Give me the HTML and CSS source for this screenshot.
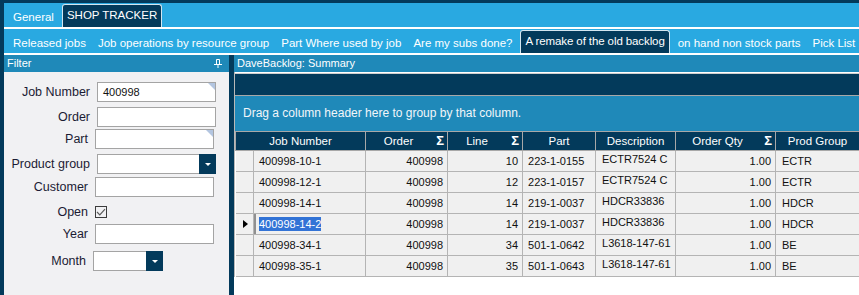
FILE: index.html
```html
<!DOCTYPE html>
<html lang="en">

<head>
  <meta charset="utf-8">
  <link rel="stylesheet" href="styles.css">
</head>

<body>
  <div class="app">
    <div class="tabstrip">
      <span class="tab first">General</span>
      <span class="tab active">SHOP TRACKER</span>
    </div>
    <div class="tabstrip sub">
      <span class="tab first">Released jobs</span>
      <span class="tab">Job operations by resource group</span>
      <span class="tab">Part Where used by job</span>
      <span class="tab">Are my subs done?</span>
      <span class="tab active">A remake of the old backlog</span>
      <span class="tab">on hand non stock parts</span>
      <span class="tab">Pick List</span>
    </div>

    <div class="main">
      <div class="filter">
        <div class="panel-title">
          <span>Filter</span>
          <svg class="pin" width="8" height="9" viewBox="0 0 8 9">
            <path d="M2.5 0.5 H5.5 V5 M2.5 0.5 V5 M0 5.5 H8 M4 5.5 V9" stroke="#fff" fill="none" stroke-width="1" />
          </svg>
        </div>
        <div class="filter-body">
          <div class="row">
            <label>Job Number</label>
            <div class="field corner">400998</div>
          </div>
          <div class="row mt5">
            <label>Order</label>
            <div class="field"></div>
          </div>
          <div class="row s2 mt2">
            <label>Part</label>
            <div class="field corner"></div>
          </div>
          <div class="row mt5">
            <label>Product group</label>
            <div class="combo"><span class="combo-btn"></span></div>
          </div>
          <div class="row s2 mt3">
            <label>Customer</label>
            <div class="field"></div>
          </div>
          <div class="row s2 mt5">
            <label>Open</label>
            <span class="check">
              <svg width="10" height="10" viewBox="0 0 10 10">
                <path d="M1 5 L3.8 7.8 L9 2.2" stroke="#5a5a5a" stroke-width="1.2" fill="none" />
              </svg>
            </span>
          </div>
          <div class="row s2 mt2">
            <label>Year</label>
            <div class="field"></div>
          </div>
          <div class="row s4 mt7">
            <label>Month</label>
            <div class="combo small"><span class="combo-btn"></span></div>
          </div>
        </div>
      </div>

      <div class="summary">
        <div class="panel-title">DaveBacklog: Summary</div>
        <div class="grid">
          <div class="band"></div>
          <div class="group-area">Drag a column header here to group by that column.</div>
          <table class="data">
            <colgroup>
              <col style="width:18px">
              <col style="width:112px">
              <col style="width:82px">
              <col style="width:75px">
              <col style="width:73px">
              <col style="width:80px">
              <col style="width:100px">
              <col style="width:84px">
            </colgroup>
            <thead>
              <tr>
                <th colspan="2">Job Number</th>
                <th class="sum">Order<span class="sigma">Σ</span></th>
                <th class="sum">Line<span class="sigma">Σ</span></th>
                <th>Part</th>
                <th>Description</th>
                <th class="sum">Order Qty<span class="sigma">Σ</span></th>
                <th>Prod Group</th>
              </tr>
            </thead>
            <tbody>
              <tr>
                <td class="ind"></td>
                <td class="txt">400998-10-1</td>
                <td class="num">400998</td>
                <td class="num">10</td>
                <td class="txt">223-1-0155</td>
                <td class="desc">ECTR7524 C</td>
                <td class="num">1.00</td>
                <td class="txt grp">ECTR</td>
              </tr>
              <tr>
                <td class="ind"></td>
                <td class="txt">400998-12-1</td>
                <td class="num">400998</td>
                <td class="num">12</td>
                <td class="txt">223-1-0157</td>
                <td class="desc">ECTR7524 C</td>
                <td class="num">1.00</td>
                <td class="txt grp">ECTR</td>
              </tr>
              <tr>
                <td class="ind"></td>
                <td class="txt">400998-14-1</td>
                <td class="num">400998</td>
                <td class="num">14</td>
                <td class="txt">219-1-0037</td>
                <td class="desc">HDCR33836</td>
                <td class="num">1.00</td>
                <td class="txt grp">HDCR</td>
              </tr>
              <tr>
                <td class="ind"><span class="arrow"></span></td>
                <td class="txt focus"><span class="sel">400998-14-2</span></td>
                <td class="num">400998</td>
                <td class="num">14</td>
                <td class="txt">219-1-0037</td>
                <td class="desc">HDCR33836</td>
                <td class="num">1.00</td>
                <td class="txt grp">HDCR</td>
              </tr>
              <tr>
                <td class="ind"></td>
                <td class="txt">400998-34-1</td>
                <td class="num">400998</td>
                <td class="num">34</td>
                <td class="txt">501-1-0642</td>
                <td class="desc">L3618-147-61</td>
                <td class="num">1.00</td>
                <td class="txt grp">BE</td>
              </tr>
              <tr>
                <td class="ind"></td>
                <td class="txt">400998-35-1</td>
                <td class="num">400998</td>
                <td class="num">35</td>
                <td class="txt">501-1-0643</td>
                <td class="desc">L3618-147-61</td>
                <td class="num">1.00</td>
                <td class="txt grp">BE</td>
              </tr>
            </tbody>
          </table>
        </div>
      </div>
    </div>
  </div>
</body>

</html>
```

FILE: styles.css
```css
body {
  margin: 0;
  width: 859px;
  height: 295px;
  overflow: hidden;
  background-color: #033a5b;
  font-family: 'Liberation Sans', Arial, sans-serif;
}

.app {
  height: 292px;
  padding: 3px 0 0 4px;
  display: flex;
  flex-direction: column;
}

/* tab strips */
.tabstrip {
  height: 24px;
  flex-shrink: 0;
  display: flex;
  align-items: flex-end;
  background-color: #29a9e1;
  color: #fff;
  font-size: 11.5px;
  white-space: nowrap;
  overflow: hidden;
}

.tabstrip.sub {
  border-top: 2px solid #fff;
  border-bottom: 2px solid #fff;
}

.tab {
  height: 20px;
  line-height: 20px;
  padding: 3px 6px 0;
}

.tab.first {
  margin-left: 3px;
}

.tab.active {
  height: 22px;
  padding: 0 4px;
  margin: 0 2px;
  background-color: #033a5b;
  border: 1px solid #d4e6f0;
  border-bottom: 0;
  border-radius: 3px 3px 0 0;
}

.sub .tab.active {
  letter-spacing: -0.1px;
}

/* panels */
.main {
  flex: 1;
  display: flex;
  min-height: 0;
}

.panel-title {
  height: 17px;
  line-height: 17px;
  padding-left: 3px;
  background-color: #1f89b9;
  color: #fff;
  font-size: 11px;
  display: flex;
  align-items: center;
}

.filter {
  width: 225px;
  flex-shrink: 0;
  background-color: #f1f1f3;
}

.pin {
  margin-left: auto;
  margin-right: 7px;
}

.filter-body {
  padding-top: 10px;
  font-size: 12.5px;
  color: #1b1b33;
}

.row {
  height: 20px;
  margin-left: 6px;
  display: flex;
  align-items: center;
}

.row.s2 {
  margin-left: 4px;
}

.row.s4 {
  margin-left: 2px;
}

.mt2 { margin-top: 2px; }
.mt3 { margin-top: 3px; }
.mt5 { margin-top: 5px; }
.mt7 { margin-top: 7px; }

.row label {
  width: 80px;
  margin-right: 7px;
  text-align: right;
  white-space: nowrap;
}

.field,
.combo {
  position: relative;
  width: 119px;
  height: 20px;
  box-sizing: border-box;
  border: 1px solid #a4a4a4;
  background-color: #fff;
  padding: 0 5px;
  font-size: 11px;
  line-height: 18px;
  color: #111;
}

.corner::after {
  content: "";
  position: absolute;
  top: 0;
  right: 0;
  border-style: solid;
  border-width: 0 7px 7px 0;
  border-color: transparent #b3c5e0 transparent transparent;
}

.combo {
  padding: 0;
  display: flex;
}

.combo.small {
  width: 70px;
}

.combo-btn {
  width: 17px;
  margin: -1px -1px -1px auto;
  background-color: #033a5b;
  display: flex;
  align-items: center;
  justify-content: center;
}

.combo-btn::after {
  content: "";
  border-left: 3px solid transparent;
  border-right: 3px solid transparent;
  border-top: 3px solid #fff;
  margin-top: 1px;
}

.check {
  width: 12px;
  height: 12px;
  box-sizing: border-box;
  border: 1px solid #3c3c3c;
  display: flex;
  align-items: center;
  justify-content: center;
}

/* summary grid */
.summary {
  flex: 1;
  margin-left: 5px;
  background-color: #fff;
}

.grid {
  border-left: 1px solid #b8b8b8;
}

.band {
  height: 22px;
  background-color: #033a5b;
  border-top: 1px solid #fff;
  border-bottom: 1px solid #a8a8a8;
  box-shadow: inset 0 1px #cfcfcf;
}

.group-area {
  height: 35px;
  line-height: 35px;
  padding-left: 8px;
  background-color: #1f89b9;
  border-bottom: 1px solid #a8a8a8;
  color: #f2f6f9;
  font-size: 12px;
}

.data {
  width: 624px;
  table-layout: fixed;
  border-collapse: collapse;
  font-size: 11px;
  color: #111;
}

.data th {
  position: relative;
  height: 18px;
  padding: 0;
  background-color: #033a5b;
  border: 1px solid #a8a8a8;
  border-top: 0;
  color: #fff;
  font-weight: normal;
  font-size: 11.5px;
  text-align: center;
}

.data th.sum {
  padding-right: 16px;
}

.sigma {
  position: absolute;
  right: 3px;
  top: 1px;
  font-weight: bold;
  font-size: 13px;
}

.data td {
  height: 20px;
  padding: 0;
  background-color: #f0f0f0;
  border: 1px solid #b4b4b4;
  white-space: nowrap;
  overflow: hidden;
}

.data td.ind {
  border-left: 0;
}

.data td.txt {
  padding-left: 5px;
}

.data td.grp {
  padding-left: 6px;
}

.data td.num {
  text-align: right;
  padding-right: 4px;
}

.data td.desc {
  height: 18px;
  vertical-align: top;
  padding: 2px 0 0 6px;
}

.arrow {
  display: block;
  width: 0;
  height: 0;
  margin-left: 7px;
  border-top: 4px solid transparent;
  border-bottom: 4px solid transparent;
  border-left: 5px solid #000;
}

.data td.focus {
  box-shadow: inset 2px 0 #909090;
}

.sel {
  background-color: #3273d6;
  color: #fff;
  padding: 1px 0;
}
```
